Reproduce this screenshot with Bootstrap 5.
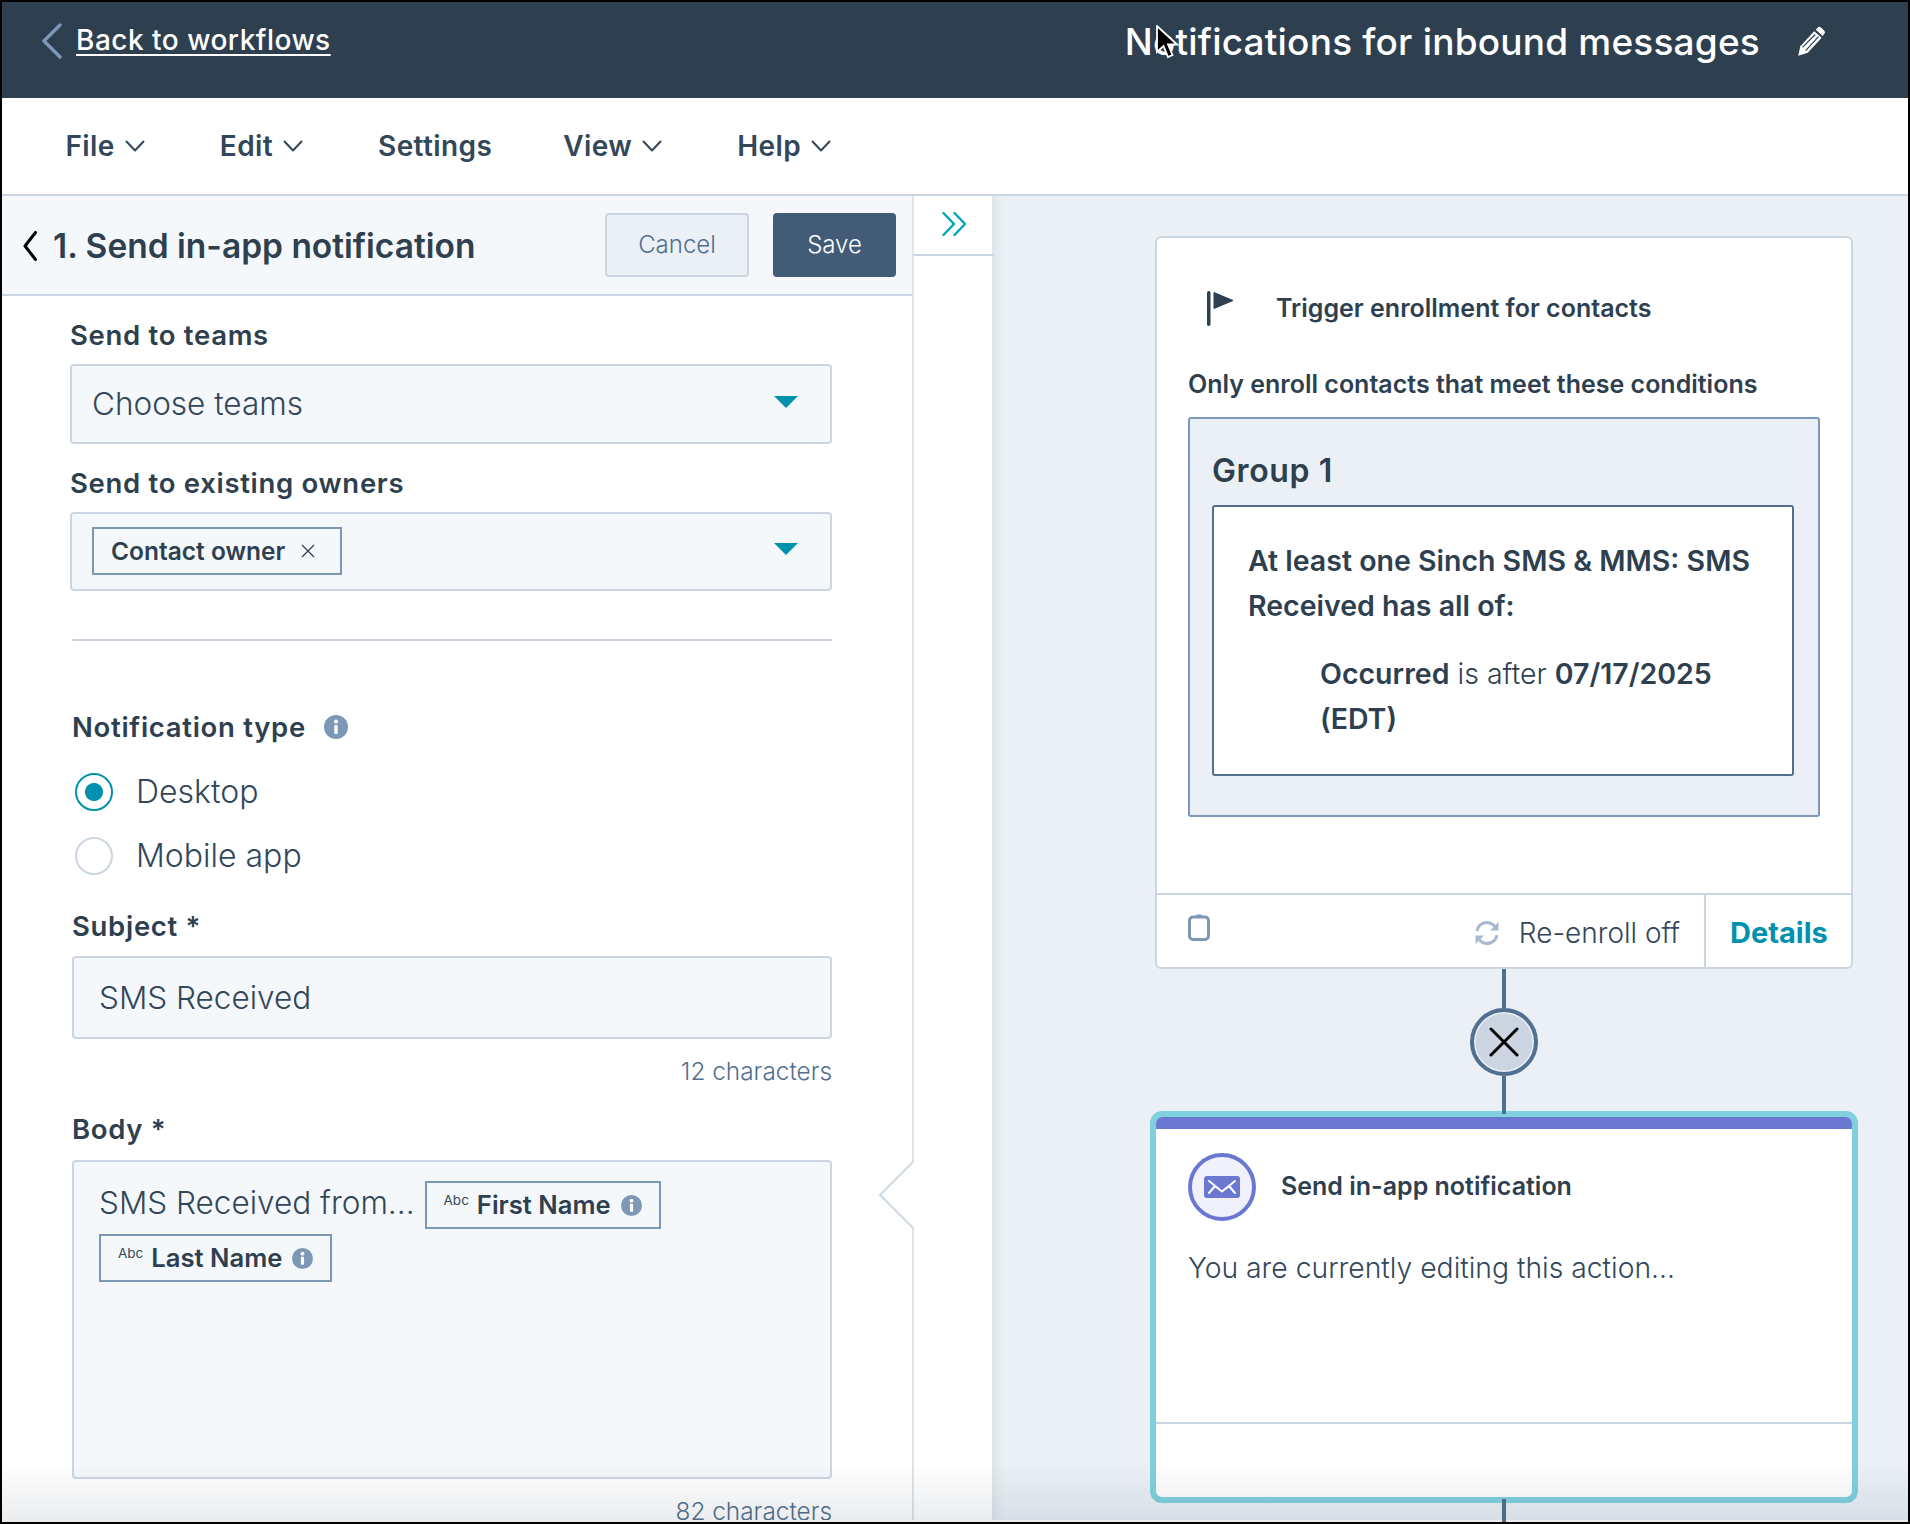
<!DOCTYPE html>
<html lang="en"><head><meta charset="utf-8"><title>Workflow</title>
<link href="https://cdn.jsdelivr.net/npm/bootstrap@5.3.0/dist/css/bootstrap.min.css" rel="stylesheet">
<style>
html,body{height:100%;}
body{background:#000;padding:2px 2px 2px 2px;overflow:hidden;font-family:"Inter","Liberation Sans",sans-serif;color:#33475b;font-weight:300;}
.wf-app{position:relative;width:1906px;height:1520px;background:#fff;overflow:hidden;}
.wf-top{height:96px;background:#2e3f50;color:#fff;padding:0 82px 14px 39px;}
.wf-back{color:#fff;font-size:28px;font-weight:500;margin-left:14px;letter-spacing:.5px;text-decoration-thickness:2px;text-underline-offset:4px;margin-top:-1px;}
.wf-top-l{margin-top:-5px;}
.wf-title{font-size:37px;font-weight:500;letter-spacing:.2px;color:#fff;}
.wf-top-r{margin-top:-2px;}
.wf-pencil{margin-left:36px;}
.wf-menu{height:98px;border-bottom:2px solid #cbd6e2;padding:0 0 0 63.5px;}
.wf-menu-item{font-size:28px;font-weight:600;letter-spacing:.4px;color:#33475b;display:flex;align-items:center;gap:10px;}
.wf-main{height:1324px;}
.wf-left{width:910px;height:100%;overflow:hidden;flex:none;}
.wf-phead{height:100px;background:#f5f8fa;border-bottom:2px solid #cbd6e2;padding:2px 16px 0 21px;}
.wf-phead-t{font-size:33.500px;font-weight:600;color:#2e3f50;margin:0 0 0 16px;}
.wf-btn{height:64px;border-radius:4px;font-size:24px;font-weight:300;padding:0;display:flex;align-items:center;justify-content:center;margin-top:-2px;}
.wf-cancel{width:144px;background:#eaf0f6;border:2px solid #cbd6e2;color:#506e91;margin-right:24px;}
.wf-save{width:123px;background:#425b76;border:2px solid #425b76;color:#fff;}
.wf-body{padding:24px 80px 0 68px;}
.wf-label{font-size:27.500px;line-height:30px;font-weight:600;letter-spacing:.7px;color:#2e3f50;margin:0;}
.wf-field{background:#f5f8fa;border:2px solid #cbd6e2;border-radius:4px;color:#33475b;font-size:31.500px;font-weight:300;}
.wf-sel{height:79.500px;margin-top:14px;padding:0 32px 0 20px;}
.wf-caret{width:0;height:0;border-left:12px solid transparent;border-right:12px solid transparent;border-top:12px solid #0091ae;margin-top:-4px;}
.wf-tag{height:48px;border:2px solid #7c98b6;font-size:24.500px;font-weight:600;color:#2e3f50;padding:0 24px 0 17px;gap:15px;}
.wf-sep{height:2px;background:#cbd6e2;margin:48px 0 0 2px;opacity:1;border:0;}
.wf-indent{margin-left:2px;}
.wf-radio{gap:23px;font-size:32px;}
.wf-radio .form-check-label{line-height:38px;}
.wf-radio .form-check-input{width:38px;height:38px;margin:0 0 0 3px;float:none;background-color:#fff;border:2px solid #cbd6e2;flex:none;}
.wf-radio .form-check-input:checked{background-image:radial-gradient(circle,#0091ae 0 8.500px,#fff 9.500px);border-color:#0091ae;background-color:#fff;}
.wf-input{height:83px;padding:0 25px;margin-top:15px;}
.wf-count{font-size:24.400px;line-height:30px;color:#516f90;text-align:right;margin:17px 0 0;font-weight:300;}
.wf-area{height:319px;margin-top:16px;padding:19px 25px;}
.wf-area-l{gap:10px;}
.wf-area-l>span:first-child{margin-top:-4px;}
.wf-chip{height:48px;border:2px solid #7c98b6;font-size:25.600px;font-weight:600;color:#2e3f50;padding:0 17px;}
.wf-abc{font-size:13.500px;font-weight:400;margin:-9px 8px 0 0;color:#33475b;}
.wf-chip svg{margin-left:10px;}
.wf-rail{width:80px;flex:none;border-left:2px solid #dfe3eb;position:relative;background:#fff;}
.wf-rail-top{height:60px;border-bottom:2px solid #cbd6e2;padding:14px 0 0 28px;margin-right:-2px;}
.wf-notch{position:absolute;left:-36px;top:965px;}
.wf-canvas{flex:1 1 auto;background:#eaf0f6;padding:40px 0 0 158px;box-shadow:inset 14px 0 12px -12px #d6dde6;}
.wf-col{width:708px;}
.wf-c1{width:698px;height:733px;border:2px solid #cbd6e2;border-radius:6px;background:#fff;flex:none;}
.wf-c1-h{padding:52px 0 0 50px;gap:43px;font-size:25px;font-weight:600;color:#2e3f50;}
.wf-c1-b{padding:41px 31px 0;flex:1 1 auto;}
.wf-only{font-size:25px;font-weight:600;color:#2e3f50;line-height:30px;margin:0;}
.wf-group{height:400px;margin-top:18px;background:#eaf0f6;border:2px solid #7c98b6;border-radius:3px;padding:32px 24px 0 22px;}
.wf-group-t{font-size:32px;letter-spacing:.6px;line-height:40px;font-weight:600;color:#2e3f50;margin:0 0 14px;}
.wf-inner{height:271px;background:#fff;border:2px solid #516f90;border-radius:3px;padding:31px 34px;font-size:28.500px;line-height:45px;color:#2e3f50;}
.wf-inner b{font-weight:600;}
.wf-inner p{margin:0;font-weight:600;}
.wf-inner p.wf-cond{margin:23px 0 0 72px;font-weight:300;}
.wf-foot{height:74px;border-top:2px solid #cbd6e2;padding-left:31px;}
.wf-reenroll{gap:19px;font-size:28px;margin-right:24px;padding-top:3px;}
.wf-details{width:147px;height:100%;border-left:2px solid #cbd6e2;color:#0091ae;font-size:29px;font-weight:700;padding:3px 0 0 24px;}
.wf-line{width:4px;background:#516f90;flex:none;position:relative;z-index:2;}
.wf-node{width:68px;height:68px;border-radius:50%;background:#cbd6e2;border:4px solid #516f90;box-shadow:inset 0 0 0 1.500px #eaf0f6;flex:none;}
.wf-c2{width:708px;height:392px;border:6px solid #7fd1de;border-radius:12px;background:#fff;flex:none;overflow:hidden;}
.wf-bar{height:12px;background:#6a78d1;}
.wf-c2-h{padding:24px 0 0 32px;gap:25px;font-size:25px;font-weight:600;color:#2e3f50;}
.wf-c2-t{margin:25px 0 0 32px;font-size:28.300px;line-height:45px;}
.wf-c2-f{margin-top:auto;height:75px;border-top:2px solid #cbd6e2;}
.wf-fade{position:absolute;left:0;right:0;bottom:0;height:60px;pointer-events:none;background:linear-gradient(rgba(45,62,80,0),rgba(45,62,80,.1));z-index:5;}
.wf-cursor{position:absolute;left:1153px;top:23px;z-index:6;}
</style></head>
<body>
<div class="wf-app d-flex flex-column">
  <header class="wf-top d-flex align-items-center justify-content-between">
    <div class="wf-top-l d-flex align-items-center">
      <svg width="21" height="36" viewBox="0 0 21 36" fill="none"><path d="M19 2 3 18l16 16" stroke="#7c98b6" stroke-width="3.400" stroke-linecap="round" stroke-linejoin="round"/></svg>
      <a class="wf-back" href="#">Back to workflows</a>
    </div>
    <div class="wf-top-r d-flex align-items-center">
      <span class="wf-title">Notifications for inbound messages</span>
      <svg class="wf-pencil" width="30" height="32" viewBox="0 0 28 30"><path d="M2 28l2-9L17 5l7 6L11 25z" fill="#fff"/><path d="M18.500 3.500l2-2a2 2 0 0 1 2.800 0l3.200 3a2 2 0 0 1 0 2.800l-1.500 2z" fill="#fff"/><path d="M6 20 18 8M9 23 21 10" stroke="#2e3f50" stroke-width="1.100"/></svg>
    </div>
  </header>
  <nav class="wf-menu d-flex align-items-center">
    <div class="wf-menu-item" style="margin-right:75px">File <svg width="20" height="12" viewBox="0 0 20 12" fill="none"><path d="M1.500 1.500 10 10.500l8.500-9" stroke="#33475b" stroke-width="2" stroke-linecap="round" stroke-linejoin="round"/></svg></div>
    <div class="wf-menu-item" style="margin-right:75px">Edit <svg width="20" height="12" viewBox="0 0 20 12" fill="none"><path d="M1.500 1.500 10 10.500l8.500-9" stroke="#33475b" stroke-width="2" stroke-linecap="round" stroke-linejoin="round"/></svg></div>
    <div class="wf-menu-item" style="margin-right:71px">Settings</div>
    <div class="wf-menu-item" style="margin-right:75px">View <svg width="20" height="12" viewBox="0 0 20 12" fill="none"><path d="M1.500 1.500 10 10.500l8.500-9" stroke="#33475b" stroke-width="2" stroke-linecap="round" stroke-linejoin="round"/></svg></div>
    <div class="wf-menu-item">Help <svg width="20" height="12" viewBox="0 0 20 12" fill="none"><path d="M1.500 1.500 10 10.500l8.500-9" stroke="#33475b" stroke-width="2" stroke-linecap="round" stroke-linejoin="round"/></svg></div>
  </nav>
  <div class="wf-main d-flex">
    <section class="wf-left">
      <div class="wf-phead d-flex align-items-center">
        <svg width="14" height="30" viewBox="0 0 14 30" fill="none"><path d="M12.500 1.500 2 15l10.500 13.500" stroke="#000" stroke-width="3" stroke-linecap="round" stroke-linejoin="round"/></svg>
        <h2 class="wf-phead-t me-auto">1. Send in-app notification</h2>
        <button class="btn wf-btn wf-cancel" type="button">Cancel</button>
        <button class="btn wf-btn wf-save" type="button">Save</button>
      </div>
      <div class="wf-body">
        <p class="wf-label">Send to teams</p>
        <div class="wf-field wf-sel d-flex align-items-center justify-content-between"><span>Choose teams</span><span class="wf-caret"></span></div>
        <p class="wf-label" style="margin-top:24px">Send to existing owners</p>
        <div class="wf-field wf-sel d-flex align-items-center justify-content-between">
          <span class="wf-tag d-flex align-items-center">Contact owner <svg width="16" height="16" viewBox="0 0 16 16" fill="none"><path d="M2 2l12 12M14 2 2 14" stroke="#33475b" stroke-width="1.400"/></svg></span>
          <span class="wf-caret"></span>
        </div>
        <hr class="wf-sep">
        <div class="wf-indent">
          <div class="wf-label d-flex align-items-center" style="margin-top:71px;gap:18px">Notification type
            <svg width="24" height="24" viewBox="0 0 24 24"><circle cx="12" cy="12" r="12" fill="#7c98b6"/><circle cx="12" cy="6.500" r="2" fill="#fff"/><rect x="10.300" y="10" width="3.400" height="9" rx=".8" fill="#fff"/></svg>
          </div>
          <div class="form-check wf-radio d-flex align-items-center p-0 m-0" style="margin-top:31px!important">
            <input class="form-check-input" type="radio" name="nt" id="r1" checked><label class="form-check-label" for="r1">Desktop</label>
          </div>
          <div class="form-check wf-radio d-flex align-items-center p-0 m-0" style="margin-top:26px!important">
            <input class="form-check-input" type="radio" name="nt" id="r2"><label class="form-check-label" for="r2">Mobile app</label>
          </div>
          <p class="wf-label" style="margin-top:36px">Subject *</p>
          <div class="wf-field wf-input d-flex align-items-center">SMS Received</div>
          <p class="wf-count">12 characters</p>
          <p class="wf-label" style="margin-top:28px">Body *</p>
          <div class="wf-field wf-area">
            <div class="d-flex align-items-center wf-area-l"><span>SMS Received from...</span>
              <span class="wf-chip d-inline-flex align-items-center"><span class="wf-abc">Abc</span>First Name<svg width="21" height="21" viewBox="0 0 24 24"><circle cx="12" cy="12" r="12" fill="#7c98b6"/><circle cx="12" cy="6.500" r="2.200" fill="#fff"/><rect x="10.200" y="10" width="3.600" height="9" rx=".8" fill="#fff"/></svg></span></div>
            <div class="d-flex" style="margin-top:5px"><span class="wf-chip d-inline-flex align-items-center"><span class="wf-abc">Abc</span>Last Name<svg width="21" height="21" viewBox="0 0 24 24"><circle cx="12" cy="12" r="12" fill="#7c98b6"/><circle cx="12" cy="6.500" r="2.200" fill="#fff"/><rect x="10.200" y="10" width="3.600" height="9" rx=".8" fill="#fff"/></svg></span></div>
          </div>
          <p class="wf-count">82 characters</p>
        </div>
      </div>
    </section>
    <aside class="wf-rail">
      <div class="wf-rail-top"><svg width="24" height="24" viewBox="0 0 24 24" fill="none"><path d="M1.500 1 12 12 1.500 23M12.500 1 23 12 12.500 23" stroke="#00a4bd" stroke-width="2.400" stroke-linecap="round" stroke-linejoin="round"/></svg></div>
      <svg class="wf-notch" width="38" height="70" viewBox="0 0 38 70"><path d="M36 0 2 34l34 34" fill="#fff" stroke="#cbd6e2" stroke-width="2"/><rect x="35" y="1" width="3" height="66" fill="#fff"/></svg>
    </aside>
    <main class="wf-canvas">
      <div class="wf-col d-flex flex-column align-items-center">
        <div class="card wf-c1 d-flex flex-column">
          <div class="wf-c1-h d-flex align-items-center">
            <svg width="26" height="35" viewBox="0 0 26 35"><rect x="0" y="0" width="3.500" height="35" rx="1.700" fill="#2e3f50"/><path d="M7 1.500 26 9.500 7 17.500z" fill="#2e3f50" stroke="#2e3f50" stroke-linejoin="round"/></svg>
            <span>Trigger enrollment for contacts</span>
          </div>
          <div class="wf-c1-b">
            <p class="wf-only">Only enroll contacts that meet these conditions</p>
            <div class="wf-group">
              <p class="wf-group-t">Group 1</p>
              <div class="wf-inner">
                <p>At least one Sinch SMS &amp; MMS: SMS Received has all of:</p>
                <p class="wf-cond"><b>Occurred</b> is after <b>07/17/2025 (EDT)</b></p>
              </div>
            </div>
          </div>
          <div class="wf-foot d-flex align-items-center justify-content-between">
            <svg class="mb-2" width="22" height="28" viewBox="0 0 22 28" fill="none"><rect x="1.500" y="4" width="19" height="22.500" rx="3.500" stroke="#7c98b6" stroke-width="3"/><path d="M6 5 9 1.500h4L16 5z" fill="#7c98b6"/></svg>
            <div class="d-flex align-items-center h-100">
              <div class="wf-reenroll d-flex align-items-center">
                <svg width="26" height="26" viewBox="0 0 26 26" fill="none"><path d="M3 11a10 10 0 0 1 17-5.500L23 8.500" stroke="#a8b9cc" stroke-width="3"/><path d="M24.500 2v8.500H16z" fill="#a8b9cc"/><path d="M23 15a10 10 0 0 1-17 5.500L3 17.500" stroke="#a8b9cc" stroke-width="3"/><path d="M1.500 24v-8.500H10z" fill="#a8b9cc"/></svg>
                <span>Re-enroll off</span>
              </div>
              <div class="wf-details d-flex align-items-center">Details</div>
            </div>
          </div>
        </div>
        <div class="wf-line" style="height:39px"></div>
        <div class="wf-node d-flex align-items-center justify-content-center">
          <svg width="30" height="30" viewBox="0 0 30 30" fill="none"><path d="M2 2l26 26M28 2 2 28" stroke="#000" stroke-width="3" stroke-linecap="round"/></svg>
        </div>
        <div class="wf-line" style="height:38px;margin-bottom:-3px"></div>
        <div class="card wf-c2 d-flex flex-column">
          <div class="wf-bar"></div>
          <div class="wf-c2-h d-flex align-items-center">
            <svg width="68" height="68" viewBox="0 0 68 68"><circle cx="34" cy="34" r="32" fill="#f0f1fa" stroke="#6a78d1" stroke-width="4"/><rect x="16" y="23" width="36" height="22" rx="3" fill="#6a78d1"/><path d="M21 40l6-7 7 5.500 7-5.500 6 7M21 28l13 10.500L47 28" stroke="#fff" stroke-width="2" fill="none" stroke-linecap="round" stroke-linejoin="round"/></svg>
            <span>Send in-app notification</span>
          </div>
          <p class="wf-c2-t">You are currently editing this action...</p>
          <div class="wf-c2-f"></div>
        </div>
        <div class="wf-line" style="height:40px;margin-top:-4px"></div>
      </div>
    </main>
  </div>
  <div class="wf-fade"></div>
  <svg class="wf-cursor" width="24" height="36" viewBox="0 0 24 36"><path d="M2 1v26l6.500-6 4.500 11 4.500-2-4.500-10.500h9z" fill="#000" stroke="#fff" stroke-width="1.800"/></svg>
</div>
</body></html>
